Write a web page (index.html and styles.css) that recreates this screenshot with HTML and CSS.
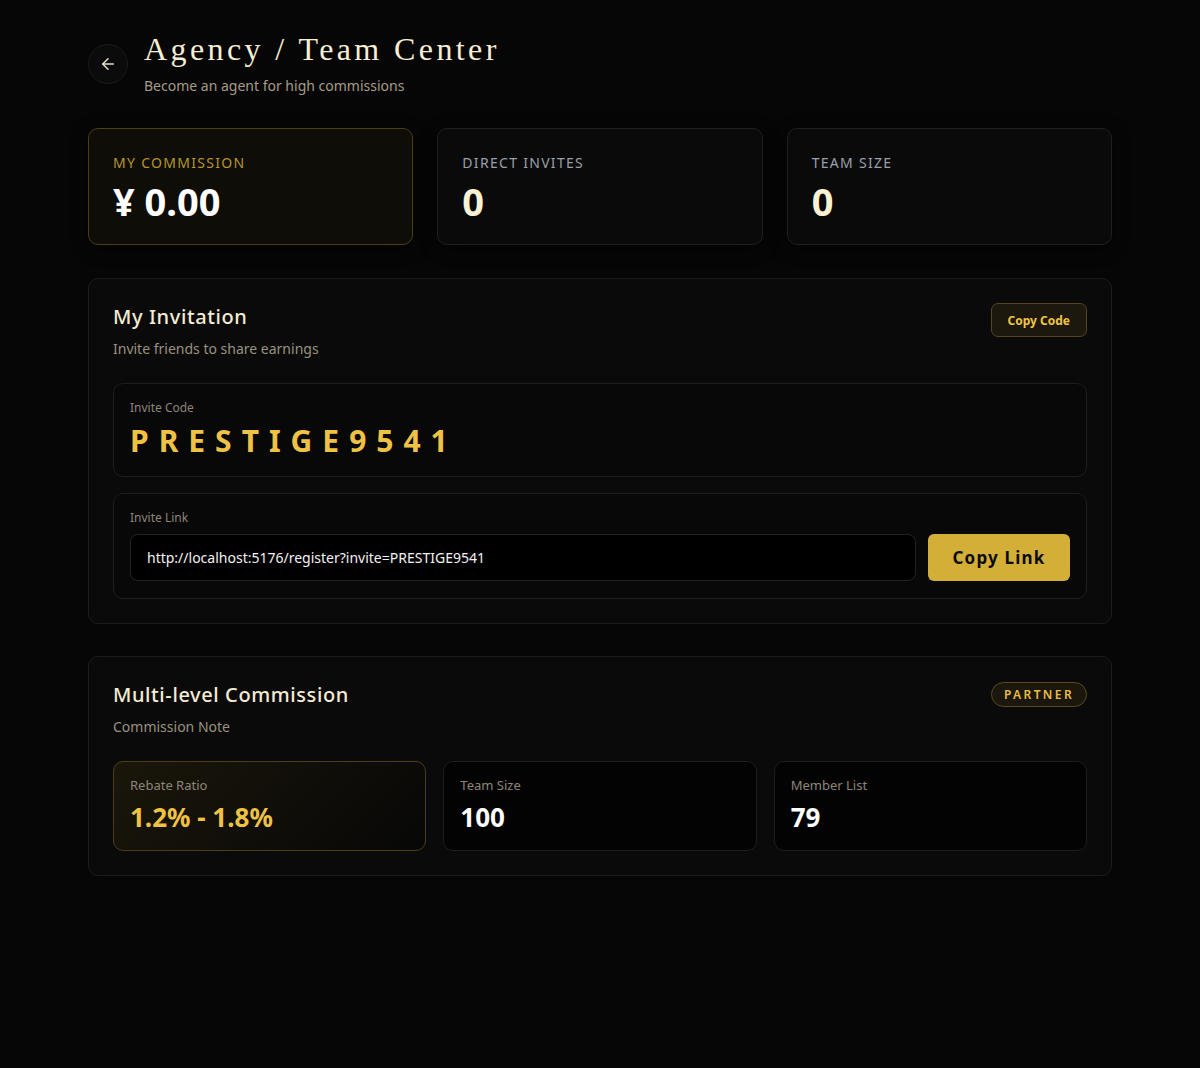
FILE: index.html
```html
<!DOCTYPE html>
<html lang="en">
<head>
    <meta charset="UTF-8">
    <meta name="viewport" content="width=device-width, initial-scale=1.0">
    <title>Agency / Team Center</title>
    <link rel="stylesheet" href="styles.css">
</head>
<body>
    <div class="page">
        <div class="header">
            <button class="back-btn" aria-label="Back">
                <svg width="18" height="18" viewBox="0 0 24 24" fill="none" stroke="currentColor" stroke-width="2" stroke-linecap="round" stroke-linejoin="round">
                    <path d="M19 12H5"/>
                    <path d="M12 19l-7-7 7-7"/>
                </svg>
            </button>
            <div class="header-text">
                <h1>Agency / Team Center</h1>
                <p>Become an agent for high commissions</p>
            </div>
        </div>

        <div class="stats">
            <div class="stat stat-gold">
                <div class="stat-label">My Commission</div>
                <div class="stat-value">¥ 0.00</div>
            </div>
            <div class="stat">
                <div class="stat-label">Direct Invites</div>
                <div class="stat-value">0</div>
            </div>
            <div class="stat">
                <div class="stat-label">Team Size</div>
                <div class="stat-value">0</div>
            </div>
        </div>

        <div class="card">
            <div class="card-head">
                <div>
                    <h2>My Invitation</h2>
                    <p class="card-sub">Invite friends to share earnings</p>
                </div>
                <button class="btn-outline">Copy Code</button>
            </div>

            <div class="box">
                <div class="box-label">Invite Code</div>
                <div class="invite-code">PRESTIGE9541</div>
            </div>

            <div class="box">
                <div class="box-label">Invite Link</div>
                <div class="link-row">
                    <input class="link-input" type="text" value="http://localhost:5176/register?invite=PRESTIGE9541" readonly>
                    <button class="btn-gold">Copy Link</button>
                </div>
            </div>
        </div>

        <div class="card">
            <div class="card-head">
                <div>
                    <h2>Multi-level Commission</h2>
                    <p class="card-sub">Commission Note</p>
                </div>
                <span class="badge">PARTNER</span>
            </div>

            <div class="levels">
                <div class="level level-gold">
                    <div class="box-label">Rebate Ratio</div>
                    <div class="level-value">1.2% - 1.8%</div>
                </div>
                <div class="level">
                    <div class="box-label">Team Size</div>
                    <div class="level-value">100</div>
                </div>
                <div class="level">
                    <div class="box-label">Member List</div>
                    <div class="level-value">79</div>
                </div>
            </div>
        </div>
    </div>
</body>
</html>
```

FILE: styles.css
```css
* {
    box-sizing: border-box;
}
body {
    margin: 0;
    background-color: #060606;
    font-family: "Noto Sans", "Open Sans", Arial, sans-serif;
    color: #f5ecd2;
    min-height: 1068px;
}
.page {
    width: 1024px;
    margin-left: 88px;
    padding-top: 32px;
}
.header {
    display: flex;
    align-items: flex-start;
    gap: 16px;
    margin-bottom: 32px;
}
.back-btn {
    width: 40px;
    height: 40px;
    margin-top: 12px;
    border-radius: 50%;
    border: 1px solid #1c1c1c;
    background: #0b0b0b;
    color: #e8e0cc;
    display: flex;
    align-items: center;
    justify-content: center;
    padding: 0;
}
.header-text h1 {
    margin: -2px 0 0;
    font-family: "Liberation Serif", "DejaVu Serif", serif;
    font-weight: 400;
    font-size: 32px;
    letter-spacing: 3.4px;
    line-height: 38px;
    color: #f7eed4;
}
.header-text p {
    margin: 8px 0 0;
    font-size: 14px;
    color: #a59c86;
}
.stats {
    display: grid;
    grid-template-columns: repeat(3, 1fr);
    gap: 24px;
    margin-bottom: 33px;
    padding-top: 1px;
}
.stat {
    height: 117px;
    padding: 24px 24px 20px;
    background: #0a0a0a;
    border: 1px solid #1f1f1f;
    border-radius: 10px;
    box-shadow: 0 4px 16px rgba(0, 0, 0, 0.5);
}
.stat-gold {
    background: #0f0d08;
    border-color: #4a3d17;
}
.stat-label {
    font-size: 14px;
    text-transform: uppercase;
    letter-spacing: 1.3px;
    color: #9ba0ab;
}
.stat-gold .stat-label {
    color: #b6952c;
}
.stat-value {
    margin-top: 4px;
    font-size: 38px;
    font-weight: 700;
    line-height: 50px;
    color: #fbf2d4;
}
.stat-gold .stat-value {
    color: #ffffff;
}
.card {
    background: #0a0a0a;
    border: 1px solid #1d1d1d;
    border-radius: 10px;
    padding: 24px;
    margin-bottom: 32px;
}
.card-head {
    display: flex;
    justify-content: space-between;
    align-items: flex-start;
    margin-bottom: 25px;
}
.card-head h2 {
    margin: 0;
    font-size: 20px;
    font-weight: 500;
    letter-spacing: 0.6px;
    line-height: 28px;
    color: #f5ecd2;
}
.card-sub {
    margin: 8px 0 0;
    font-size: 14px;
    color: #9a927f;
}
.btn-outline {
    height: 34px;
    padding: 0 16px;
    border: 1px solid #54451a;
    background: #1c180d;
    color: #f0c443;
    font-family: inherit;
    font-weight: 700;
    font-size: 12px;
    border-radius: 7px;
}
.box {
    background: #080808;
    border: 1px solid #1e1e1e;
    border-radius: 10px;
    padding: 15px 16px 17px;
    margin-bottom: 16px;
}
.box:last-child {
    margin-bottom: 0;
}
.box-label {
    font-size: 12px;
    line-height: 17px;
    color: #8d8678;
}
.invite-code {
    margin-top: 7px;
    font-size: 30px;
    font-weight: 700;
    letter-spacing: 10px;
    line-height: 36px;
    color: #efc244;
}
.link-row {
    display: flex;
    gap: 12px;
    margin-top: 8px;
}
.link-input {
    flex: 1;
    height: 47px;
    padding: 0 16px;
    background: #000;
    border: 1px solid #232323;
    border-radius: 8px;
    color: #f2f2f2;
    font-family: inherit;
    font-size: 14px;
    outline: none;
}
.btn-gold {
    width: 142px;
    height: 47px;
    border: none;
    border-radius: 6px;
    background: #d4af37;
    color: #0a0a0a;
    font-family: inherit;
    font-weight: 700;
    font-size: 17px;
    letter-spacing: 1.2px;
}
.badge {
    margin-top: 1px;
    padding: 4px 12px;
    border: 1px solid #5a4a1c;
    background: #1b170c;
    border-radius: 999px;
    color: #e8bd45;
    font-size: 12px;
    font-weight: 600;
    line-height: 15px;
    letter-spacing: 2.4px;
}
.levels {
    display: grid;
    grid-template-columns: repeat(3, 1fr);
    gap: 17px;
}
.level {
    height: 90px;
    padding: 15px 16px;
    background: #030303;
    border: 1px solid #1d1d1d;
    border-radius: 10px;
}
.level .box-label {
    font-size: 13px;
}
.level-gold {
    background: linear-gradient(135deg, #1a160a, #070707);
    border-color: #4a3d17;
}
.level-value {
    margin-top: 6px;
    font-size: 26px;
    font-weight: 700;
    line-height: 34px;
    color: #ffffff;
}
.level-gold .level-value {
    color: #efc244;
}
```
